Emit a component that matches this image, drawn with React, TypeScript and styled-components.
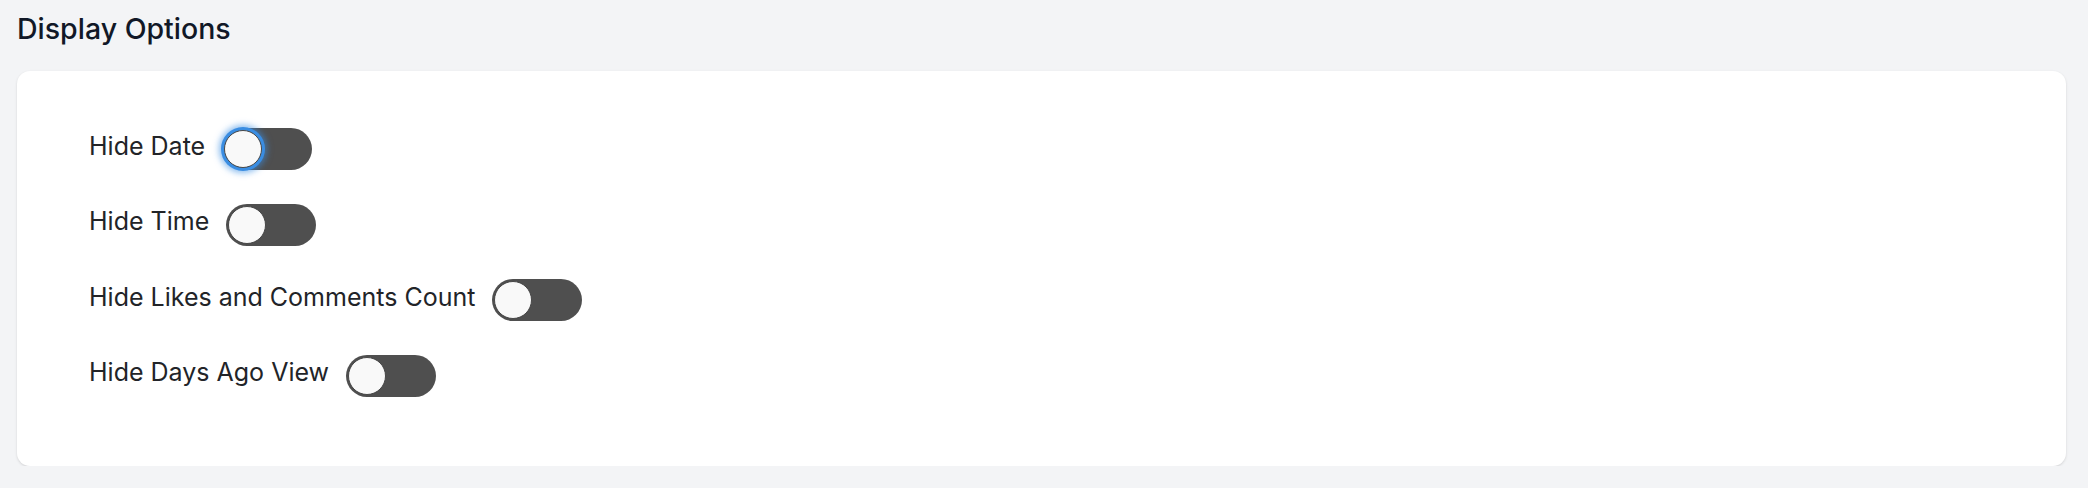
import { useState } from 'react';
import styled, { createGlobalStyle } from 'styled-components';

const GlobalStyle = createGlobalStyle`
  body {
    margin: 0;
    background-color: #f3f4f6;
    font-family: Inter, "Noto Sans", sans-serif;
  }
`;

const Page = styled.div`
  padding: 13px 22px 0px 17px;
`;

const Title = styled.h2`
  margin: 0px 0px 26px 0px;
  font-size: 28.5px;
  line-height: 32px;
  font-weight: 500;
  color: #111827;
`;

const Card = styled.div`
  display: flex;
  flex-direction: column;
  gap: 33.5px;
  padding: 57px 72px 69px;
  background-color: white;
  border-radius: 13px;
  box-shadow: 0px 1px 3px rgba(0, 0, 0, 0.1), 0px 1px 2px rgba(0, 0, 0, 0.04);
`;

const Row = styled.div`
  display: flex;
  align-items: center;
  gap: 17px;
`;

const Label = styled.span`
  font-size: 25px;
  line-height: 30px;
  padding-bottom: 7px;
  color: #222428;
`;

const Track = styled.button`
  position: relative;
  width: 90px;
  height: 42px;
  padding: 0;
  border: none;
  border-radius: 21px;
  background-color: #4f4f4f;
  cursor: pointer;
  outline: none;
`;

const Knob = styled.span<{ $on: boolean; $focused: boolean }>`
  position: absolute;
  top: 2px;
  left: ${(p) => (p.$on ? '50px' : '2px')};
  width: 38px;
  height: 38px;
  box-sizing: border-box;
  border-radius: 50%;
  background-color: #f9f9f9;
  border: 1.5px solid #474747;
  box-shadow: ${(p) =>
    p.$focused
      ? '0 0 0 3px #3a8de2, 0 0 6px 5px rgba(58, 141, 226, 0.6)'
      : 'none'};
`;

const options = [
  'Hide Date',
  'Hide Time',
  'Hide Likes and Comments Count',
  'Hide Days Ago View',
];

const Toggle = ({ on, focused, onClick }: { on: boolean; focused: boolean; onClick: () => void }) => (
  <Track role='switch' aria-checked={on} onClick={onClick}>
    <Knob $on={on} $focused={focused} />
  </Track>
);

export default function App() {
  const [values, setValues] = useState<boolean[]>([false, false, false, false]);
  const [focused, setFocused] = useState(0);

  const flip = (i: number) => {
    setFocused(i);
    setValues(values.map((v, j) => (j === i ? !v : v)));
  };

  return (
    <Page>
      <GlobalStyle />
      <Title>Display Options</Title>
      <Card>
        {options.map((label, i) => (
          <Row key={label}>
            <Label>{label}</Label>
            <Toggle on={values[i]} focused={focused === i} onClick={() => flip(i)} />
          </Row>
        ))}
      </Card>
    </Page>
  );
}
